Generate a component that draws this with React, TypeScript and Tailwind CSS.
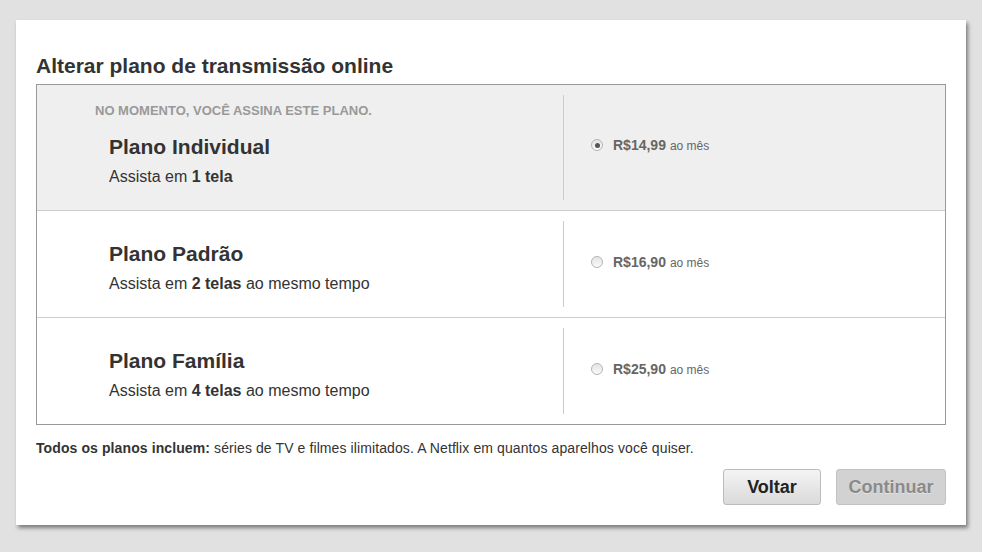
import React from 'react'

const plans = [
  { name: 'Plano Individual', screens: '1 tela', extra: '', price: 'R$14,99', current: true },
  { name: 'Plano Padrão', screens: '2 telas', extra: ' ao mesmo tempo', price: 'R$16,90', current: false },
  { name: 'Plano Família', screens: '4 telas', extra: ' ao mesmo tempo', price: 'R$25,90', current: false },
]

function Radio({ checked }: { checked: boolean }) {
  return (
    <span className="w-[12px] h-[12px] rounded-full border border-[#b5b5b5] bg-gradient-to-b from-[#e4e4e4] to-[#fafafa] flex items-center justify-center">
      {checked && <span className="w-[5px] h-[5px] rounded-full bg-[#555]" />}
    </span>
  )
}

export default function App() {
  return (
    <div className="w-[982px] h-[552px] bg-[#e1e1e1] pt-[20px] pl-[16px] font-['Liberation_Sans',Arial,sans-serif]">
      <div className="w-[950px] bg-white shadow-[2px_3px_4px_rgba(0,0,0,0.45)] px-[20px] pt-[34px] pb-[20px]">
        {/* Title */}
        <h1 className="text-[21px] leading-[24px] font-bold text-[#333] mb-[6px]">
          Alterar plano de transmissão online
        </h1>

        {/* Plans */}
        <div className="border border-[#999]">
          {plans.map((p, i) => (
            <div
              key={p.name}
              className={
                'flex ' +
                (i > 0 ? 'border-t border-[#ccc] h-[107px] ' : 'h-[125px] ') +
                (p.current ? 'bg-[#efefef]' : 'bg-white')
              }
            >
              <div
                className={
                  'w-[526px] flex flex-col ' +
                  (p.current ? 'justify-start pt-[18px]' : 'justify-center pt-[7px]')
                }
              >
                {p.current && (
                  <p className="pl-[58px] text-[13px] leading-[15px] font-bold text-[#999] mb-[17px]">
                    NO MOMENTO, VOCÊ ASSINA ESTE PLANO.
                  </p>
                )}
                <div className="pl-[72px]">
                  <h2 className="text-[21px] leading-[24px] font-bold text-[#333]">{p.name}</h2>
                  <p className="text-[16px] leading-[18px] text-[#333] mt-[9px]">
                    Assista em <b>{p.screens}</b>
                    {p.extra}
                  </p>
                </div>
              </div>
              <div className="py-[10px] flex">
                <div className="w-px bg-[#ccc]" />
              </div>
              <div className="flex-1 flex items-center pl-[27px] -mt-[5px] gap-[10px]">
                <Radio checked={p.current} />
                <span className="text-[#666]">
                  <span className="text-[14px] font-bold">{p.price}</span>
                  <span className="text-[12px] ml-[4px]">ao mês</span>
                </span>
              </div>
            </div>
          ))}
        </div>

        {/* Footer note */}
        <p className="text-[14px] leading-[16px] tracking-[0.1px] text-[#333] mt-[15px]">
          <b>Todos os planos incluem:</b> séries de TV e filmes ilimitados. A Netflix em quantos aparelhos você quiser.
        </p>

        {/* Actions */}
        <div className="flex justify-end gap-[15px] mt-[13px]">
          <button className="w-[98px] h-[36px] rounded-[3px] border border-[#bbb] bg-gradient-to-b from-[#f4f4f4] to-[#dadada] text-[18px] font-bold text-[#222]">
            Voltar
          </button>
          <button className="w-[110px] h-[36px] rounded-[3px] border border-[#c2c2c2] bg-[#d2d2d2] text-[18px] font-bold text-[#8a8a8a] [text-shadow:0_1px_0_rgba(255,255,255,0.4)]">
            Continuar
          </button>
        </div>
      </div>
    </div>
  )
}
